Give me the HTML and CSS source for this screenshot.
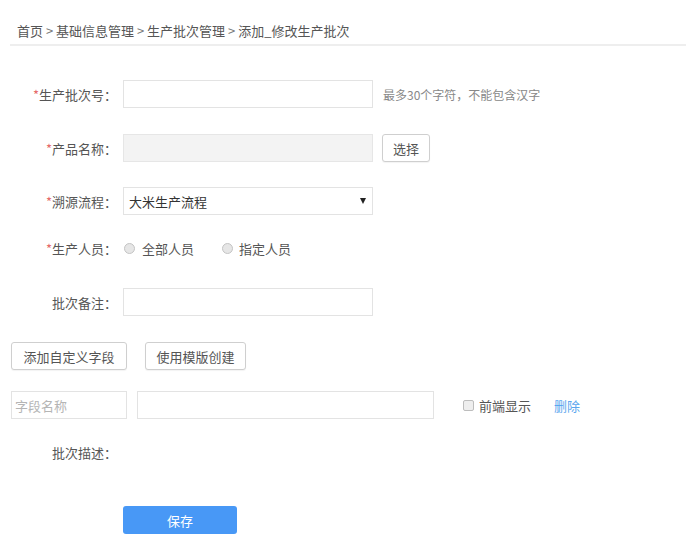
FILE: index.html
```html
<!DOCTYPE html>
<html lang="zh-CN">
<head>
<meta charset="utf-8">
<title>添加_修改生产批次</title>
<link rel="stylesheet" href="styles.css">
</head>
<body>
<div class="page">
  <div class="crumb">首页 <span class="sep">&gt;</span> 基础信息管理 <span class="sep">&gt;</span> 生产批次管理 <span class="sep">&gt;</span> 添加_修改生产批次</div>

  <div class="form">
    <div class="row r1">
      <label class="lbl"><span class="req">*</span>生产批次号：</label>
      <div class="input"></div>
      <span class="hint">最多30个字符，不能包含汉字</span>
    </div>
    <div class="row r2">
      <label class="lbl"><span class="req">*</span>产品名称：</label>
      <div class="input disabled"></div>
      <button class="btn btn-pick">选择</button>
    </div>
    <div class="row r3">
      <label class="lbl"><span class="req">*</span>溯源流程：</label>
      <div class="input select"><span class="sel-text">大米生产流程</span><span class="arrow"></span></div>
    </div>
    <div class="row r4">
      <label class="lbl"><span class="req">*</span>生产人员：</label>
      <span class="radio"></span><span class="opt">全部人员</span>
      <span class="radio radio2"></span><span class="opt">指定人员</span>
    </div>
    <div class="row r5">
      <label class="lbl">批次备注：</label>
      <div class="input"></div>
    </div>

    <div class="btnrow">
      <button class="btn btn-add">添加自定义字段</button>
      <button class="btn btn-tpl">使用模版创建</button>
    </div>

    <div class="fieldrow">
      <div class="input fname"><span class="ph">字段名称</span></div>
      <div class="input fval"></div>
      <span class="check"></span><span class="opt">前端显示</span>
      <a class="del">删除</a>
    </div>

    <div class="row r6">
      <label class="lbl">批次描述：</label>
    </div>

    <div class="saverow">
      <button class="btn-save">保存</button>
    </div>
  </div>
</div>
</body>
</html>
```

FILE: styles.css
```css
* { box-sizing: border-box; }
html, body { margin: 0; padding: 0; background: #fff; }
body {
  font-family: "Noto Sans CJK SC", "Noto Sans", "Liberation Sans", sans-serif;
  font-size: 13px;
  color: #555;
}
.page { width: 686px; }
.crumb {
  margin-left: 10px;
  padding: 22px 0 4px 7px;
  line-height: 18px;
  color: #555;
  border-bottom: 2px solid #eeeeee;
}
.crumb .sep { color: #777; }
.form { padding-top: 34px; }
.row { display: flex; align-items: center; height: 28px; }
.r1 { margin-bottom: 26px; }
.r2 { margin-bottom: 25px; }
.r3 { margin-bottom: 19px; }
.r4 { margin-bottom: 26px; }
.r5 { margin-bottom: 26px; }
.lbl {
  width: 117px;
  margin-right: 6px;
  text-align: right;
  color: #555;
  white-space: nowrap;
}
.req { color: #e56a6a; }
.input {
  width: 250px;
  height: 28px;
  border: 1px solid #e3e3e3;
  background: #fff;
}
.input.disabled { background: #f3f3f3; border-color: #e6e6e6; }
.hint { margin-left: 10px; font-size: 12px; color: #888; }
.btn {
  height: 28px;
  border: 1px solid #cfcfcf;
  border-radius: 3px;
  background: #fff;
  font-family: inherit;
  font-size: 13px;
  color: #555;
  padding: 0;
  box-shadow: 0 1px 1px rgba(0,0,0,0.05);
}
.btn-pick { width: 48px; margin-left: 9px; }
.select {
  display: flex;
  align-items: center;
  justify-content: space-between;
  padding: 0 5px 0 5px;
}
.sel-text { color: #333; font-size: 13px; }
.arrow {
  width: 0; height: 0;
  border-left: 3px solid transparent;
  border-right: 3px solid transparent;
  border-top: 6px solid #222;
  margin-right: 1px;
}
.radio {
  width: 11px; height: 11px;
  border-radius: 50%;
  border: 1px solid #c4c4c4;
  background: #e6e6e6;
  margin-left: 1px;
  margin-right: 7px;
}
.radio2 { margin-left: 28px; margin-right: 6px; }
.opt { color: #555; }
.btnrow { display: flex; padding-left: 11px; margin-bottom: 21px; }
.btn-add { width: 116px; }
.btn-tpl { width: 101px; margin-left: 18px; }
.fieldrow { display: flex; align-items: center; padding-left: 11px; height: 28px; margin-bottom: 19px; }
.fname { width: 116px; display: flex; align-items: center; padding-left: 3px; }
.ph { color: #b5b5b5; font-size: 13px; }
.fval { width: 297px; margin-left: 10px; }
.check {
  width: 11px; height: 11px;
  border: 1px solid #bdbdbd;
  border-radius: 2px;
  background: #eeeeee;
  margin-left: 29px;
  margin-right: 5px;
}
.del { color: #5aa6ee; margin-left: 23px; cursor: pointer; }
.r6 { margin-bottom: 40px; }
.saverow { padding-left: 123px; }
.btn-save {
  width: 114px;
  height: 28px;
  border: none;
  border-radius: 3px;
  background: #4898f6;
  color: #fff;
  font-family: inherit;
  font-size: 13px;
  padding: 0;
}
```
